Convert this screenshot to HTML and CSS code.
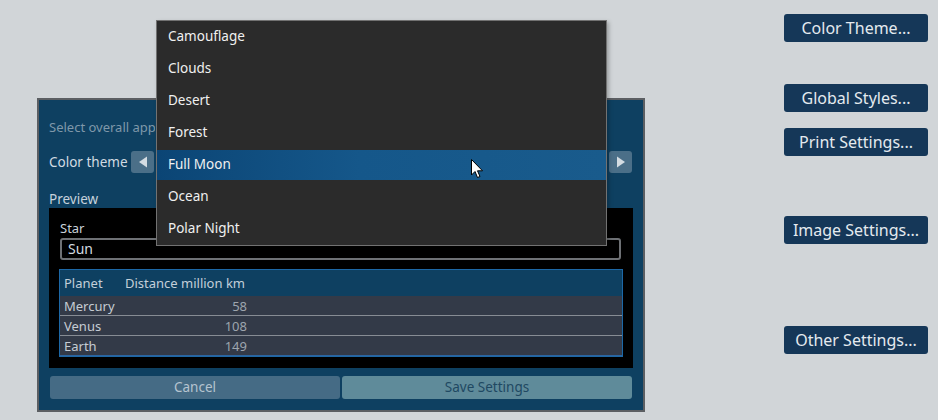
FILE: index.html
```html
<!DOCTYPE html>
<html>
<head>
<meta charset="utf-8">
<link rel="stylesheet" href="styles.css">
</head>
<body>
<div class="page">
  <div class="dialog">
    <div class="hint"><span class="hint-text">Select overall appearance of the application</span></div>
    <div class="theme-row">
      <span class="theme-label">Color theme</span>
      <span class="arrow-btn"><svg width="10" height="12" viewBox="0 0 10 12"><path d="M9 0.5 L9 11.5 L1 6 Z" fill="#d4dce2"/></svg></span>
      <span class="theme-spacer"></span>
      <span class="arrow-btn"><svg width="10" height="12" viewBox="0 0 10 12"><path d="M1 0.5 L1 11.5 L9 6 Z" fill="#d4dce2"/></svg></span>
    </div>
    <div class="preview-label">Preview</div>
    <div class="preview">
      <div class="star-label">Star</div>
      <div class="star-input">Sun</div>
      <div class="table">
        <div class="thead">
          <span class="c-planet">Planet</span>
          <span class="c-dist">Distance million km</span>
        </div>
        <div class="trow"><span class="c-planet">Mercury</span><span class="c-num">58</span></div>
        <div class="trow"><span class="c-planet">Venus</span><span class="c-num">108</span></div>
        <div class="trow last"><span class="c-planet">Earth</span><span class="c-num">149</span></div>
      </div>
    </div>
    <div class="actions">
      <div class="btn cancel">Cancel</div>
      <div class="btn save">Save Settings</div>
    </div>
  </div>

  <div class="side">
    <div class="side-btn s1">Color Theme...</div>
    <div class="side-btn s2">Global Styles...</div>
    <div class="side-btn s3">Print Settings...</div>
    <div class="side-btn s4">Image Settings...</div>
    <div class="side-btn s5">Other Settings...</div>
  </div>

  <div class="dropdown">
    <div class="item">Camouflage</div>
    <div class="item">Clouds</div>
    <div class="item">Desert</div>
    <div class="item">Forest</div>
    <div class="item selected">Full Moon</div>
    <div class="item">Ocean</div>
    <div class="item">Polar Night</div>
  </div>

  <svg class="cursor" width="13" height="20" viewBox="0 0 13 20"><path d="M0.5 0.5 L0.5 16 L4 12.5 L6.5 18.5 L9 17.5 L6.5 11.8 L11.5 11.8 Z" fill="#ffffff" stroke="#000000" stroke-width="1" stroke-linejoin="miter"/></svg>
</div>
</body>
</html>
```

FILE: styles.css
```css
html, body {
  margin: 0;
  padding: 0;
  background: #d1d5d8;
  font-family: "Noto Sans", "Open Sans", sans-serif;
}
.page {
  position: relative;
  width: 938px;
  height: 420px;
  overflow: hidden;
  display: flex;
  align-items: flex-start;
}
.dialog {
  margin-left: 37px;
  margin-top: 98px;
  border: 2px solid #5b5e62;
  background: #0e4061;
  padding: 18px 0 0 10px;
  box-sizing: content-box;
  width: 594px;
  height: 292px;
  display: flex;
  flex-direction: column;
  font-size: 13px;
}
.hint {
  height: 18px;
  line-height: 18px;
  width: 106px;
  color: #7f98aa;
  white-space: nowrap;
  overflow: hidden;
}
.theme-row {
  margin-top: 15px;
  height: 22px;
  display: flex;
  align-items: center;
}
.theme-label {
  color: #d2dbe2;
  width: 82px;
  font-size: 13.5px;
}
.arrow-btn {
  width: 23px;
  height: 22px;
  border-radius: 3px;
  background: #4b6f88;
  display: flex;
  align-items: center;
  justify-content: center;
}
.theme-spacer {
  width: 455px;
}
.preview-label {
  margin-top: 17px;
  height: 18px;
  line-height: 18px;
  color: #c6d2dc;
  font-size: 13.5px;
}
.preview {
  width: 584px;
  height: 160px;
  box-sizing: border-box;
  background: #000000;
  padding: 11px 10px 11px 10px;
  display: flex;
  flex-direction: column;
}
.star-label {
  height: 18px;
  line-height: 18px;
  color: #c9d2da;
  padding-left: 1px;
}
.star-input {
  margin: 1px 2px 0 1px;
  height: 22px;
  box-sizing: border-box;
  border: 2px solid #6e7175;
  border-radius: 3px;
  color: #d3dae0;
  line-height: 18px;
  padding-left: 6px;
  font-size: 14px;
}
.table {
  margin-top: 9px;
  height: 88px;
  box-sizing: border-box;
  border: 1px solid #1d68a6;
  background: #333a48;
  display: flex;
  flex-direction: column;
}
.thead {
  height: 26px;
  background: #0e4061;
  display: flex;
  align-items: center;
  color: #c3cfd9;
}
.trow {
  height: 20px;
  box-sizing: border-box;
  border-bottom: 1px solid #878c94;
  display: flex;
  align-items: center;
  color: #c6ccd3;
}
.trow.last {
  border-bottom: 1px solid #2e64a0;
}
.c-planet {
  width: 61px;
  padding-left: 4px;
}
.c-dist {
  width: 130px;
}
.c-num {
  width: 122px;
  text-align: right;
  color: #9ea5ae;
}
.actions {
  margin-top: 8px;
  padding-left: 1px;
  display: flex;
  gap: 2px;
}
.btn {
  width: 290px;
  height: 23px;
  border-radius: 3px;
  line-height: 23px;
  text-align: center;
  font-size: 13.5px;
}
.cancel {
  background: #456b85;
  color: #b5c4d0;
}
.save {
  background: #5f8b9a;
  color: #204862;
}
.side {
  margin-left: 139px;
  margin-top: 14px;
  display: flex;
  flex-direction: column;
}
.side-btn {
  width: 144px;
  height: 28px;
  box-sizing: border-box;
  background: #153758;
  border-radius: 3px;
  color: #e4eaef;
  font-size: 16px;
  line-height: 28px;
  text-align: center;
  white-space: nowrap;
}
.s2 { margin-top: 42px; }
.s3 { margin-top: 16px; }
.s4 { margin-top: 60px; }
.s5 { margin-top: 82px; }
.dropdown {
  position: absolute;
  left: 156px;
  top: 20px;
  width: 451px;
  height: 226px;
  box-sizing: border-box;
  background: #2b2b2b;
  border: 1px solid #727272;
  box-shadow: 2px 2px 4px rgba(0,0,0,0.25);
}
.item {
  height: 32px;
  line-height: 30px;
  padding-left: 11px;
  color: #f0f0f0;
  font-size: 13.5px;
}
.item.selected {
  height: 30px;
  margin: 1px 0 1px 0;
  line-height: 28px;
  background: linear-gradient(90deg, #0b4575 0%, #15578a 45%, #195b8c 100%);
}
.cursor {
  position: absolute;
  left: 471px;
  top: 159px;
}
```
